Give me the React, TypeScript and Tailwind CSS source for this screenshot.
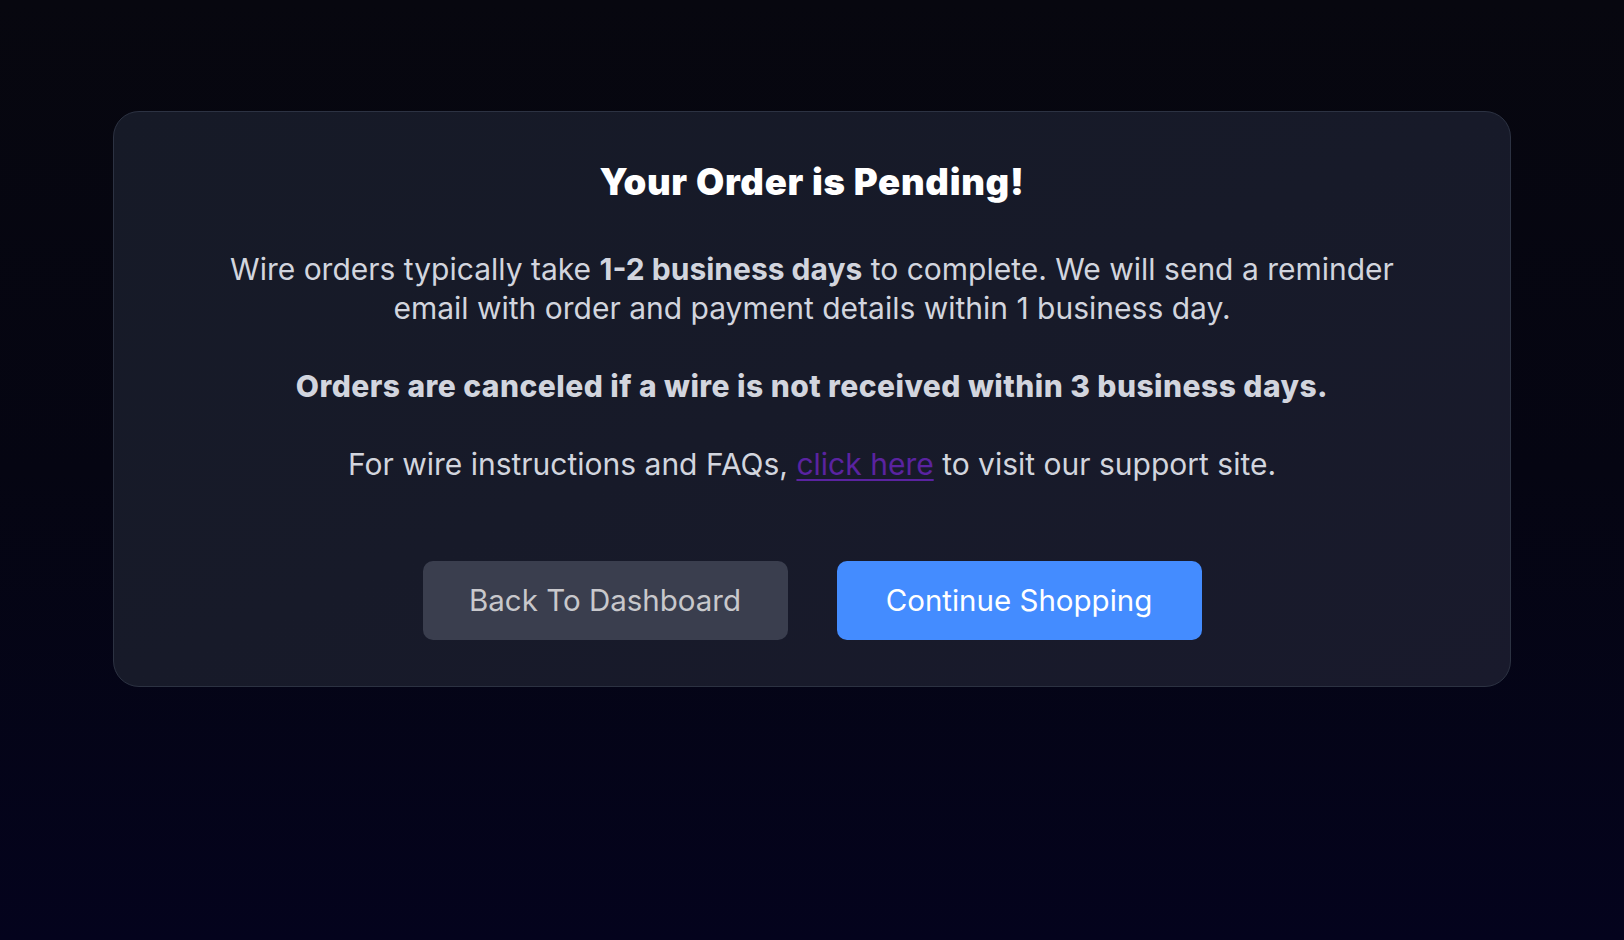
import React from 'react';

const sans = "font-['Inter','Noto_Sans',sans-serif]";

export default function App() {
  return (
    <div className={`min-h-screen w-full bg-gradient-to-b from-[#07070f] via-[#050512] to-[#04031d] ${sans}`}>
      <div className="flex justify-center pt-[111px]">
        {/* Pending card */}
        <div className="w-[1398px] rounded-[26px] border border-[#2c3242] bg-gradient-to-br from-[#161a27] via-[#171a29] to-[#191a2c] px-10 pt-[52px] pb-[46px] text-center">
          <h1 className="text-[36.5px] leading-[36px] font-black tracking-[0.02em] text-white">
            Your Order is Pending!
          </h1>

          <div className="mt-[50px] text-[30px] leading-[39px] text-[#d2d5de]">
            <p>
              Wire orders typically take <span className="font-bold">1-2 business days</span> to complete. We will send a reminder
              <br />
              email with order and payment details within 1 business day.
            </p>
            <p className="mt-[39px] font-extrabold tracking-[0.015em]">
              Orders are canceled if a wire is not received within 3 business days.
            </p>
            <p className="mt-[39px]">
              For wire instructions and FAQs,{' '}
              <a href="#" className="text-[#5a23a0] underline underline-offset-[4px] decoration-2">
                click here
              </a>{' '}
              to visit our support site.
            </p>
          </div>

          <div className="mt-[77px] flex justify-center gap-[49px]">
            <button className="h-[79px] w-[365px] rounded-[10px] bg-[#3a3e4e] text-[29.5px] text-[#c8c8cc]">
              Back To Dashboard
            </button>
            <button className="h-[79px] w-[365px] rounded-[10px] bg-[#448cff] text-[29.5px] text-white">
              Continue Shopping
            </button>
          </div>
        </div>
      </div>
    </div>
  );
}
